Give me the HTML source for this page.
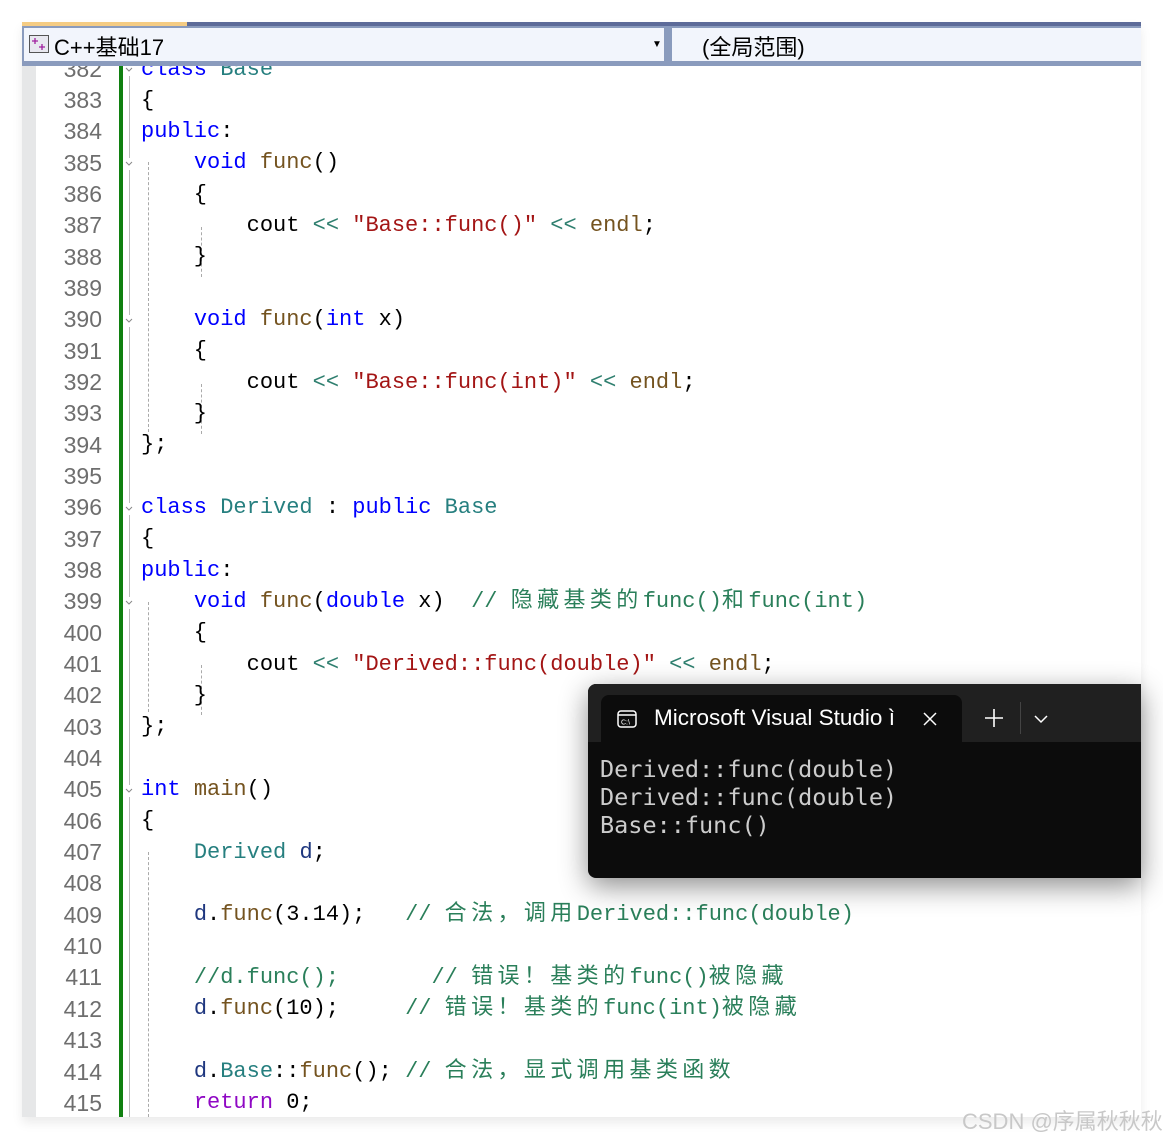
<!DOCTYPE html>
<html><head><meta charset="utf-8">
<style>
html,body{margin:0;padding:0;background:#fff;width:1163px;height:1139px;overflow:hidden;position:relative;font-family:"Liberation Sans","Noto Sans CJK SC",sans-serif}
#ed{position:absolute;left:22px;top:22px;width:1119px;height:1095px;background:#fff;overflow:hidden;box-shadow:0 6px 10px rgba(0,0,0,.08)}
#topbar1{position:absolute;left:0;top:0;width:165px;height:4px;background:#f5cc84;z-index:5}
#topbar2{position:absolute;left:165px;top:0;right:0;height:4px;background:#5d6b99;z-index:5}
#hdr{position:absolute;left:0;top:4px;right:0;height:40px;background:#8a9bbd;z-index:5}
.dd{position:absolute;top:2px;height:33px;background:#f2f5fc;font-size:22px;line-height:33px;color:#000}
#gut{position:absolute;left:0;top:44px;width:14px;bottom:0;background:#e6e7e8}
#nums{position:absolute;left:14px;top:31.5px;width:66px;text-align:right;font-size:23px;color:#6e6e6e;line-height:31.34px;margin:0}
#code{position:absolute;left:119px;top:31.5px;margin:0;font-family:"Liberation Mono","Noto Sans CJK SC",monospace;font-size:22px;color:#000}
#code div{height:31.34px;line-height:31.34px;white-space:pre;overflow:visible}
.z{letter-spacing:4.4px;font-family:"Noto Sans CJK SC",sans-serif;line-height:0}
.k{color:#0000ff}.t{color:#267f7f}.f{color:#74531f}.s{color:#a31515}.c{color:#2a7f5a}.v{color:#1f377f}.p{color:#8f08c4}.o{color:#2f7f6f}
#green{position:absolute;left:97px;top:44px;width:4px;bottom:0;background:#108010}
.fold{position:absolute;left:102px;width:10px;height:12px;background:#fff}
.vl{position:absolute;width:0;border-left:1px solid #bbb}
.guide{position:absolute;width:0;border-left:1px dashed #aaa}
#term{position:absolute;left:588px;top:684px;width:553px;height:194px;background:#0c0c0c;border-radius:8px 0 0 8px;box-shadow:0 8px 28px rgba(0,0,0,.45);overflow:hidden}
#tabbar{position:absolute;left:0;top:0;right:0;height:58px;background:#202020}
#tab{position:absolute;left:13px;top:11px;width:361px;height:47px;background:#0c0c0c;border-radius:8px 8px 0 0}
.tt{position:absolute;color:#fff;font-size:22.5px;font-family:"Liberation Sans",sans-serif}
.out{position:absolute;left:12px;margin:0;color:#cccccc;font-family:"DejaVu Sans Mono","Liberation Mono",monospace;font-size:23.5px;line-height:28px;white-space:pre}
#wm{position:absolute;left:962px;top:1104px;font-size:22px;color:#c8c8c8;font-family:"Liberation Sans","Noto Sans CJK SC",sans-serif}
</style></head><body>
<div id="ed">
<div id="topbar1"></div><div id="topbar2"></div>
<div id="hdr">
 <div class="dd" style="left:2px;width:640px">
  <svg style="position:absolute;left:5px;top:7px" width="20" height="18"><rect x="0.5" y="0.5" width="19" height="17" fill="#e8e8f0" stroke="#555"/><path d="M3 6h6M6 3v6M10 12h6M13 9v6" stroke="#a020a0" stroke-width="1.3"/></svg>
  <span style="position:absolute;left:30px;top:3px">C++基础17</span>
  <span style="position:absolute;left:628px;top:0;font-size:10px">▼</span>
 </div>
 <div class="dd" style="left:650px;right:0"><span style="position:absolute;left:30px;top:3px">(全局范围)</span></div>
</div>
<div id="gut"></div>
<div id="green"></div>
<div class="vl" style="left:107px;top:50px;height:1050px"></div>
<div class="guide" style="left:126px;top:140px;height:270px"></div>
<div class="guide" style="left:179px;top:205px;height:50px"></div>
<div class="guide" style="left:179px;top:362px;height:50px"></div>
<div class="guide" style="left:126px;top:580px;height:110px"></div>
<div class="guide" style="left:179px;top:643px;height:50px"></div>
<div class="guide" style="left:126px;top:830px;height:270px"></div>
<svg class="fold" style="top:42px" viewBox="0 0 10 12"><path d="M2 4l3 3 3-3" fill="none" stroke="#888"/></svg>
<svg class="fold" style="top:136px" viewBox="0 0 10 12"><path d="M2 4l3 3 3-3" fill="none" stroke="#888"/></svg>
<svg class="fold" style="top:293px" viewBox="0 0 10 12"><path d="M2 4l3 3 3-3" fill="none" stroke="#888"/></svg>
<svg class="fold" style="top:481px" viewBox="0 0 10 12"><path d="M2 4l3 3 3-3" fill="none" stroke="#888"/></svg>
<svg class="fold" style="top:575px" viewBox="0 0 10 12"><path d="M2 4l3 3 3-3" fill="none" stroke="#888"/></svg>
<svg class="fold" style="top:763px" viewBox="0 0 10 12"><path d="M2 4l3 3 3-3" fill="none" stroke="#888"/></svg>
<div id="nums">382<br>383<br>384<br>385<br>386<br>387<br>388<br>389<br>390<br>391<br>392<br>393<br>394<br>395<br>396<br>397<br>398<br>399<br>400<br>401<br>402<br>403<br>404<br>405<br>406<br>407<br>408<br>409<br>410<br>411<br>412<br>413<br>414<br>415</div>
<div id="code">
<div><span class="k">class</span> <span class="t">Base</span></div>
<div>{</div>
<div><span class="k">public</span>:</div>
<div>    <span class="k">void</span> <span class="f">func</span>()</div>
<div>    {</div>
<div>        cout <span class="o">&lt;&lt;</span> <span class="s">"Base::func()"</span> <span class="o">&lt;&lt;</span> <span class="f">endl</span>;</div>
<div>    }</div>
<div></div>
<div>    <span class="k">void</span> <span class="f">func</span>(<span class="k">int</span> x)</div>
<div>    {</div>
<div>        cout <span class="o">&lt;&lt;</span> <span class="s">"Base::func(int)"</span> <span class="o">&lt;&lt;</span> <span class="f">endl</span>;</div>
<div>    }</div>
<div>};</div>
<div></div>
<div><span class="k">class</span> <span class="t">Derived</span> : <span class="k">public</span> <span class="t">Base</span></div>
<div>{</div>
<div><span class="k">public</span>:</div>
<div>    <span class="k">void</span> <span class="f">func</span>(<span class="k">double</span> x)  <span class="c">// <span class="z">隐藏基类的</span>func()<span class="z">和</span>func(int)</span></div>
<div>    {</div>
<div>        cout <span class="o">&lt;&lt;</span> <span class="s">"Derived::func(double)"</span> <span class="o">&lt;&lt;</span> <span class="f">endl</span>;</div>
<div>    }</div>
<div>};</div>
<div></div>
<div><span class="k">int</span> <span class="f">main</span>()</div>
<div>{</div>
<div>    <span class="t">Derived</span> <span class="v">d</span>;</div>
<div></div>
<div>    <span class="v">d</span>.<span class="f">func</span>(3.14);   <span class="c">// <span class="z">合法，调用</span>Derived::func(double)</span></div>
<div></div>
<div>    <span class="c">//d.func();       // <span class="z">错误！基类的</span>func()<span class="z">被隐藏</span></span></div>
<div>    <span class="v">d</span>.<span class="f">func</span>(10);     <span class="c">// <span class="z">错误！基类的</span>func(int)<span class="z">被隐藏</span></span></div>
<div></div>
<div>    <span class="v">d</span>.<span class="t">Base</span>::<span class="f">func</span>(); <span class="c">// <span class="z">合法，显式调用基类函数</span></span></div>
<div>    <span class="p">return</span> 0;</div>
</div>
</div>

<div id="term">
 <div id="tabbar"></div>
 <div id="tab">
  <svg style="position:absolute;left:16px;top:15px" width="20" height="18"><rect x="1" y="1" width="18" height="16" rx="3" fill="none" stroke="#fff" stroke-width="1.5"/><line x1="1" y1="5" x2="19" y2="5" stroke="#fff" stroke-width="1.5"/><text x="4" y="14.5" font-size="7" fill="#fff" font-family="Liberation Sans">C:\</text></svg>
  <span class="tt" style="left:53px;top:10px">Microsoft Visual Studio ì</span>
  <svg style="position:absolute;left:322px;top:17px" width="14" height="14"><path d="M1 1L13 13M13 1L1 13" stroke="#fff" stroke-width="1.5"/></svg>
 </div>
 <svg style="position:absolute;left:396px;top:24px" width="20" height="20"><path d="M10 1v18M1 10h18" stroke="#fff" stroke-width="1.6"/></svg>
 <div style="position:absolute;left:432px;top:18px;width:1px;height:32px;background:#444"></div>
 <svg style="position:absolute;left:446px;top:31px" width="14" height="9"><path d="M1 1 L7 7 L13 1" fill="none" stroke="#fff" stroke-width="1.5"/></svg>
 <pre class="out" style="top:71px">Derived::func(double)
Derived::func(double)
Base::func()</pre>
</div>
<div id="wm">CSDN @序属秋秋秋</div>
</body></html>
